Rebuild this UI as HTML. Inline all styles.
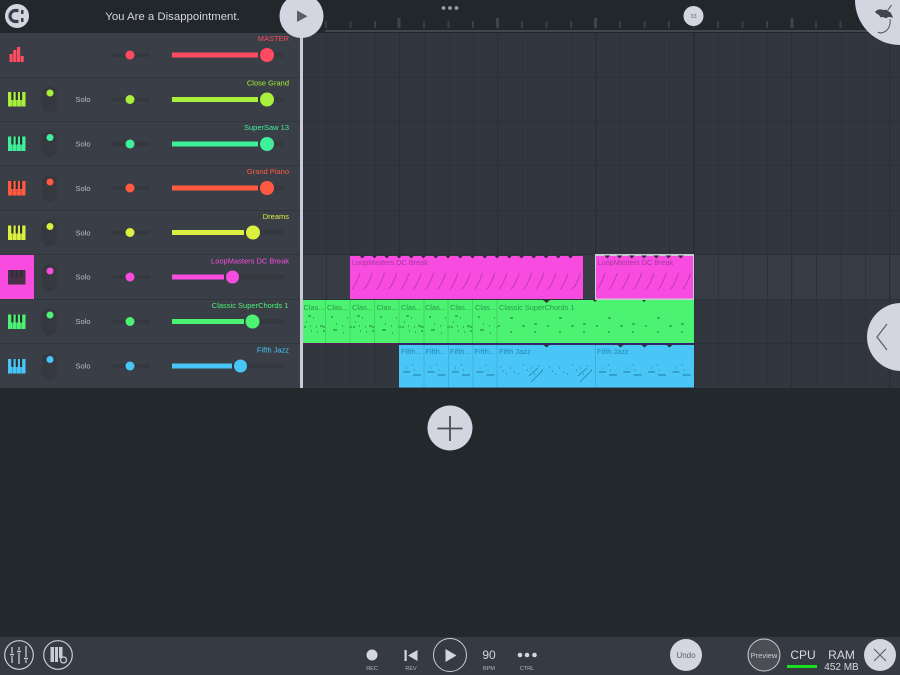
<!DOCTYPE html>
<html><head><meta charset="utf-8"><style>
html,body{margin:0;padding:0;width:900px;height:675px;overflow:hidden;background:#22282c}
svg{display:block;font-family:"Liberation Sans",sans-serif;filter:blur(.3px)}
</style></head><body>
<svg width="900" height="675" viewBox="0 0 900 675" xmlns="http://www.w3.org/2000/svg">
<defs>
<pattern id="grid" patternUnits="userSpaceOnUse" x="301.5" y="0" width="24.5" height="10"><rect x="0" width="1" height="10" fill="#2e3238"/></pattern>
<pattern id="bar" patternUnits="userSpaceOnUse" x="301" y="0" width="98" height="10"><rect x="0" width="1" height="10" fill="#2a2e34"/></pattern>
<pattern id="tick" patternUnits="userSpaceOnUse" x="325" y="21" width="24.5" height="9"><rect x="0" y="0" width="2" height="7" fill="#3a3e45"/></pattern>
<pattern id="pk" patternUnits="userSpaceOnUse" x="350" y="255" width="12.25" height="44"><path d="M2 34Q6 30 10 18" stroke="#a8309c" stroke-width=".7" fill="none"/></pattern>
<pattern id="pktri" patternUnits="userSpaceOnUse" x="356" y="255" width="12.25" height="4"><path d="M3.500 .5h5.500l-2.750 3z" fill="#3a2238"/></pattern>
<pattern id="gnA" patternUnits="userSpaceOnUse" x="303" y="300" width="49" height="44"><path d="M5 16h3M10 18h1M3 22h1M1 27h2M7 26h1M13 27h1M17 26h3M20 27h3M8 31h1M14 32h1M20 31h2M28 17h2M33 24h1M30 30h4M39 26h1M44 18h1M46 27h3M40 33h1" stroke="#1d7d3a" stroke-width="1" fill="none"/></pattern>
<pattern id="gnB" patternUnits="userSpaceOnUse" x="497" y="300" width="49" height="44"><path d="M13 18h3M37 24h3M1 26h2M25 26h3M13 32h2M37 32h2" stroke="#1d7d3a" stroke-width="1" fill="none"/></pattern>
<pattern id="blA" patternUnits="userSpaceOnUse" x="399" y="344" width="24.5" height="44"><path d="M4 28h7M14 31h8M7 24h1M13 21h1M15 26h1" stroke="#1d7ba5" stroke-width="1" fill="none"/></pattern>
<pattern id="blB" patternUnits="userSpaceOnUse" x="497" y="344" width="49" height="44"><path d="M3 23h1M6 27h1M9 30h1M13 24h1M17 28h1M21 30h1M26 21h1M30 26h1M34 24h1M37 30h1M41 22h1M45 26h1" stroke="#1d7ba5" stroke-width="1" fill="none"/><path d="M32 32L41 24M34 38L46 26" stroke="#1d7ba5" stroke-width=".7" fill="none"/></pattern>
<g id="piano"><rect x="0" y="0" width="17.500" height="14.500"/><path d="M4.400 0V14.500M8.800 0V14.500M13.100 0V14.500" stroke="#2c3036" stroke-width=".5" opacity=".6"/><rect x="3.300" y="0" width="2.200" height="8" fill="#2c3036"/><rect x="7.700" y="0" width="2.200" height="8" fill="#2c3036"/><rect x="12" y="0" width="2.200" height="8" fill="#2c3036"/></g>
</defs>

<rect width="900" height="675" fill="#22282c"/>
<rect width="900" height="33" fill="#22272c"/>

<!-- arrangement -->
<rect x="300" y="33" width="600" height="355" fill="#32363e"/>
<rect x="302" y="255" width="598" height="45" fill="#383c44"/>
<rect x="300" y="33" width="600" height="355" fill="url(#grid)"/>
<rect x="300" y="33" width="600" height="355" fill="url(#bar)"/>
<rect x="693.500" y="30" width="1" height="358" fill="#25282e"/>
<path d="M300 77.500H900M300 121.500H900M300 165.500H900M300 210.500H900M300 254.500H900M300 299.500H900M300 343.500H900" stroke="#2c3037" stroke-width="1"/>

<!-- ruler -->
<rect x="325" y="21" width="540" height="9" fill="url(#tick)"/>
<rect x="397.500" y="18" width="3" height="10" fill="#3f434a"/><rect x="496" y="18" width="3" height="10" fill="#3f434a"/><rect x="594" y="18" width="3" height="10" fill="#3f434a"/><rect x="790.500" y="18" width="3" height="10" fill="#3f434a"/>
<rect x="325" y="30" width="555" height="2" fill="#41464d"/>
<circle cx="443.500" cy="8" r="1.900" fill="#9b9ea6"/><circle cx="450" cy="8" r="1.900" fill="#9b9ea6"/><circle cx="456.500" cy="8" r="1.900" fill="#9b9ea6"/>
<circle cx="693.500" cy="16" r="10" fill="#d3d6e0"/><text x="693.500" y="18" font-size="5.500" fill="#6a6e76" text-anchor="middle">33</text>

<!-- clips -->
<rect x="350" y="256" width="233" height="43" fill="#f84ce0"/>
<rect x="350" y="256" width="233" height="43" fill="url(#pk)"/>
<rect x="356" y="255" width="220" height="4" fill="url(#pktri)"/>
<rect x="595" y="254" width="99" height="46" fill="#c9cbd3"/>
<rect x="596" y="256" width="97" height="42.500" fill="#f84ce0"/>
<rect x="596" y="256" width="97" height="42.500" fill="url(#pk)"/>
<rect x="601" y="255" width="85" height="4" fill="url(#pktri)"/>
<text x="352" y="265" font-size="7.300" fill="#a8359c">LoopMasters DC Break</text>
<text x="597.500" y="265" font-size="7.300" fill="#a8359c">LoopMasters DC Break</text>

<rect x="303" y="300" width="391" height="43" fill="#4cf272"/>
<rect x="303" y="300" width="194" height="43" fill="url(#gnA)"/>
<rect x="497" y="300" width="197" height="43" fill="url(#gnB)"/>
<path d="M325.500 300v43M350 300v43M374.500 300v43M399 300v43M424 300v43M448 300v43M472.500 300v43M497 300v43" stroke="#3fd561" stroke-width="1"/>
<path d="M543 300h7l-3.500 3zM593 300h4l-2 2zM642 300h4l-2 2z" fill="#333"/>
<rect x="303" y="343" width="96" height="1.500" fill="#5b1b55"/><rect x="399" y="343" width="295" height="1.500" fill="#3a1d7a"/>
<g font-size="7.400" fill="#259a48">
<text x="303.500" y="310">Clas...</text><text x="327" y="310">Clas...</text><text x="352" y="310">Clas...</text><text x="376.500" y="310">Clas...</text><text x="401" y="310">Clas...</text><text x="425" y="310">Clas...</text><text x="450" y="310">Clas...</text><text x="475" y="310">Clas...</text><text x="499" y="310">Classic SuperChords 1</text>
</g>

<rect x="399" y="345" width="295" height="42.500" fill="#4ac6f6"/>
<rect x="399" y="344" width="98" height="43" fill="url(#blA)"/>
<rect x="497" y="344" width="98" height="43" fill="url(#blB)"/>
<rect x="595" y="344" width="99" height="43" fill="url(#blA)"/>
<path d="M424 345v42M448.500 345v42M473 345v42M497 345v42M595.500 345v42" stroke="#3db0dc" stroke-width="1"/>
<path d="M543 344.500h7l-3.500 3zM617 344.500h7l-3.500 3zM641 344.500h7l-3.500 3zM666 344.500h7l-3.500 3z" fill="#333"/>
<g font-size="7.400" fill="#2489b3">
<text x="401" y="354">Fifth...</text><text x="425.500" y="354">Fifth...</text><text x="450" y="354">Fifth...</text><text x="474.500" y="354">Fifth...</text><text x="499" y="354">Fifth Jazz</text><text x="597" y="354">Fifth Jazz</text>
</g>

<!-- mixer panel -->
<rect x="0" y="33" width="300" height="355" fill="#3a3e46"/>
<path d="M0 77.500H300M0 121.500H300M0 165.500H300M0 210.500H300M0 254.500H300M0 299.500H300M0 343.500H300" stroke="#31353c" stroke-width="1"/>
<rect x="0" y="255" width="34" height="44" fill="#f84ce0"/>
<rect x="300" y="33" width="3" height="355" fill="#c9ccd8"/>

<!-- Row 1 master -->
<g fill="#ff4a62"><rect x="9.500" y="54" width="3.200" height="8"/><rect x="13.200" y="50" width="3.200" height="12"/><rect x="17" y="47" width="3.200" height="15"/><rect x="20.700" y="56" width="3" height="6"/></g>
<rect x="111" y="53" width="39" height="4" rx="2" fill="#35393f"/><circle cx="130" cy="55" r="4.500" fill="#ff4a62"/>
<rect x="172" y="52.500" width="112" height="5" rx="2" fill="#35393f"/><rect x="172" y="52.500" width="86" height="5" fill="#ff4a62"/><circle cx="267" cy="55" r="7" fill="#ff4a62"/>
<text x="289" y="41" font-size="7.500" fill="#ff4a62" text-anchor="end">MASTER</text>

<g><use href="#piano" x="8" y="92" fill="#a8f03c"/>
<rect x="41.500" y="86" width="16" height="27" rx="8" fill="#35393f"/><circle cx="50" cy="93" r="3.500" fill="#a8f03c"/>
<text x="83" y="102" font-size="7.500" fill="#b9bcc4" text-anchor="middle">Solo</text>
<rect x="111" y="97.500" width="39" height="4" rx="2" fill="#35393f"/><circle cx="130" cy="99.500" r="4.500" fill="#a8f03c"/>
<rect x="172" y="97" width="112" height="5" rx="2" fill="#35393f"/><rect x="172" y="97" width="86" height="5" fill="#a8f03c"/><circle cx="267" cy="99.500" r="7" fill="#a8f03c"/>
<text x="289" y="85.500" font-size="7.500" fill="#a8f03c" text-anchor="end">Close Grand</text></g>

<g><use href="#piano" x="8" y="136.500" fill="#3ef09a"/>
<rect x="41.500" y="130.500" width="16" height="27" rx="8" fill="#35393f"/><circle cx="50" cy="137.500" r="3.500" fill="#3ef09a"/>
<text x="83" y="146.500" font-size="7.500" fill="#b9bcc4" text-anchor="middle">Solo</text>
<rect x="111" y="142" width="39" height="4" rx="2" fill="#35393f"/><circle cx="130" cy="144" r="4.500" fill="#3ef09a"/>
<rect x="172" y="141.500" width="112" height="5" rx="2" fill="#35393f"/><rect x="172" y="141.500" width="86" height="5" fill="#3ef09a"/><circle cx="267" cy="144" r="7" fill="#3ef09a"/>
<text x="289" y="130" font-size="7.500" fill="#3ef09a" text-anchor="end">SuperSaw 13</text></g>

<g><use href="#piano" x="8" y="181" fill="#ff5a40"/>
<rect x="41.500" y="175" width="16" height="27" rx="8" fill="#35393f"/><circle cx="50" cy="182" r="3.500" fill="#ff5a40"/>
<text x="83" y="191" font-size="7.500" fill="#b9bcc4" text-anchor="middle">Solo</text>
<rect x="111" y="186" width="39" height="4" rx="2" fill="#35393f"/><circle cx="130" cy="188" r="4.500" fill="#ff5a40"/>
<rect x="172" y="185.500" width="112" height="5" rx="2" fill="#35393f"/><rect x="172" y="185.500" width="86" height="5" fill="#ff5a40"/><circle cx="267" cy="188" r="7" fill="#ff5a40"/>
<text x="289" y="174" font-size="7.500" fill="#ff5a40" text-anchor="end">Grand Piano</text></g>

<g><use href="#piano" x="8" y="225.500" fill="#dcf040"/>
<rect x="41.500" y="219.500" width="16" height="27" rx="8" fill="#35393f"/><circle cx="50" cy="226.500" r="3.500" fill="#dcf040"/>
<text x="83" y="235.500" font-size="7.500" fill="#b9bcc4" text-anchor="middle">Solo</text>
<rect x="111" y="230.500" width="39" height="4" rx="2" fill="#35393f"/><circle cx="130" cy="232.500" r="4.500" fill="#dcf040"/>
<rect x="172" y="230" width="112" height="5" rx="2" fill="#35393f"/><rect x="172" y="230" width="72" height="5" fill="#dcf040"/><circle cx="253" cy="232.500" r="7" fill="#dcf040"/>
<text x="289" y="219" font-size="7.500" fill="#dcf040" text-anchor="end">Dreams</text></g>

<g><rect x="8" y="270" width="17.500" height="14.500" fill="#4b3148"/><path d="M12.400 270v8M16.800 270v8M21.200 270v8" stroke="#2c3036" stroke-width="2.200"/>
<rect x="41.500" y="264" width="16" height="27" rx="8" fill="#35393f"/><circle cx="50" cy="271" r="3.500" fill="#f84ce0"/>
<text x="83" y="279.500" font-size="7.500" fill="#b9bcc4" text-anchor="middle">Solo</text>
<rect x="111" y="275" width="39" height="4" rx="2" fill="#35393f"/><circle cx="130" cy="277" r="4.500" fill="#f84ce0"/>
<rect x="172" y="274.500" width="112" height="5" rx="2" fill="#35393f"/><rect x="172" y="274.500" width="52" height="5" fill="#f84ce0"/><circle cx="232.500" cy="277" r="6.500" fill="#f84ce0"/>
<text x="289" y="263.500" font-size="7.500" fill="#f84ce0" text-anchor="end">LoopMasters DC Break</text></g>

<g><use href="#piano" x="8" y="314.500" fill="#4cf272"/>
<rect x="41.500" y="308.500" width="16" height="27" rx="8" fill="#35393f"/><circle cx="50" cy="315" r="3.500" fill="#4cf272"/>
<text x="83" y="324" font-size="7.500" fill="#b9bcc4" text-anchor="middle">Solo</text>
<rect x="111" y="319.500" width="39" height="4" rx="2" fill="#35393f"/><circle cx="130" cy="321.500" r="4.500" fill="#4cf272"/>
<rect x="172" y="319" width="112" height="5" rx="2" fill="#35393f"/><rect x="172" y="319" width="72" height="5" fill="#4cf272"/><circle cx="252.500" cy="321.500" r="7" fill="#4cf272"/>
<text x="288.500" y="308" font-size="7.500" fill="#4cf272" text-anchor="end">Classic SuperChords 1</text></g>

<g><use href="#piano" x="8" y="359" fill="#48c6f8"/>
<rect x="41.500" y="353" width="16" height="27" rx="8" fill="#35393f"/><circle cx="50" cy="359.500" r="3.500" fill="#48c6f8"/>
<text x="83" y="368.500" font-size="7.500" fill="#b9bcc4" text-anchor="middle">Solo</text>
<rect x="111" y="364" width="39" height="4" rx="2" fill="#35393f"/><circle cx="130" cy="366" r="4.500" fill="#48c6f8"/>
<rect x="172" y="363.500" width="112" height="5" rx="2" fill="#35393f"/><rect x="172" y="363.500" width="60" height="5" fill="#48c6f8"/><circle cx="240.500" cy="366" r="6.500" fill="#48c6f8"/>
<text x="289" y="352.500" font-size="7.500" fill="#48c6f8" text-anchor="end">Fifth Jazz</text></g>

<!-- top bar items -->
<circle cx="17" cy="16" r="12" fill="#d3d6e0"/>
<path d="M18.500 10.500H15.500a5.500 5.500 0 0 0 0 11H18.500" stroke="#3a3e46" stroke-width="3.200" fill="none"/><rect x="21" y="10" width="2.500" height="4" fill="#3a3e46"/><rect x="21" y="18" width="2.500" height="4" fill="#3a3e46"/>
<text x="172.500" y="20" font-size="11.400" fill="#d4d6dc" text-anchor="middle">You Are a Disappointment.</text>
<circle cx="301.500" cy="16" r="22" fill="#d3d6e0"/>
<path d="M297 10.500v11.500l10.500-5.750z" fill="#5a5e67"/>
<circle cx="900" cy="0" r="45" fill="#d3d6e0"/>
<path d="M875 12c2-3 6-3 8-2 2 0 4-1 5 1 3 1 4 4 5 7-2-1-4-1-5-1-2 2-3 1-5 0-2 1-3 0-4-2-2-1-3-2-4-3z" fill="#41454d"/>
<path d="M888 10l3.500-5M890 19c1 8-3 13-9 14-2 0-3-1-3-1" stroke="#41454d" stroke-width=".9" fill="none"/>

<!-- side tab -->
<circle cx="901" cy="337" r="34" fill="#d3d6e0"/>
<path d="M887 324L877 337L887 350" stroke="#5f636c" stroke-width="1.300" fill="none"/>

<!-- add -->
<circle cx="450" cy="428" r="22.500" fill="#d3d6e0"/>
<path d="M450 416v25M437.500 428.500h25" stroke="#4b4f57" stroke-width="1.800"/>

<!-- bottom bar -->
<rect x="0" y="637" width="900" height="38" fill="#363a42"/>
<g stroke="#c8ccd4" fill="none">
<circle cx="19" cy="655" r="14.300" stroke-width="1.200"/>
<circle cx="58" cy="655" r="14.300" stroke-width="1.200"/>
<circle cx="450" cy="655" r="16.500" stroke-width="1"/>
</g>
<path d="M12 647v6M12 656v7M19 647v3M19 653v11M26 646v11M26 660v3" stroke="#c8ccd4" stroke-width="1.300"/>
<path d="M10 654.500h4M17 651.500h4M24 658.500h4" stroke="#c8ccd4" stroke-width="1.500"/>
<g fill="#c8ccd4"><rect x="50.500" y="647" width="3.500" height="15"/><rect x="55" y="647" width="3" height="15"/><rect x="59" y="647" width="3.500" height="11"/></g>
<circle cx="63.500" cy="660" r="3" fill="none" stroke="#c8ccd4" stroke-width="1.300"/>

<circle cx="372" cy="655" r="5.500" fill="#d3d6e0"/>
<text x="372" y="670" font-size="5.500" fill="#b3b7bf" text-anchor="middle">REC</text>
<rect x="404.500" y="650" width="2.200" height="11" fill="#d3d6e0"/><path d="M417.500 650v11l-9.500-5.500z" fill="#d3d6e0"/>
<text x="411" y="670" font-size="5.500" fill="#b3b7bf" text-anchor="middle">REV</text>
<path d="M445.500 649v13l11-6.500z" fill="#d3d6e0"/>
<text x="489" y="659" font-size="12" fill="#d3d6e0" text-anchor="middle">90</text>
<text x="489" y="670" font-size="5.500" fill="#b3b7bf" text-anchor="middle">BPM</text>
<circle cx="520" cy="655" r="2.300" fill="#d3d6e0"/><circle cx="527" cy="655" r="2.300" fill="#d3d6e0"/><circle cx="534.500" cy="655" r="2.300" fill="#d3d6e0"/>
<text x="527" y="670" font-size="5.500" fill="#b3b7bf" text-anchor="middle">CTRL</text>

<circle cx="686" cy="655" r="16" fill="#d3d6e0"/>
<text x="686" y="658" font-size="8" fill="#5a5e67" text-anchor="middle">Undo</text>
<circle cx="764" cy="655" r="16" fill="#4b4f55" stroke="#c8ccd4" stroke-width="1"/>
<text x="764" y="658" font-size="7.500" fill="#c8ccd4" text-anchor="middle">Preview</text>
<text x="803" y="659" font-size="12" fill="#d8dae0" text-anchor="middle">CPU</text>
<rect x="787" y="665" width="30" height="3" fill="#18e020"/>
<text x="841.500" y="659" font-size="12" fill="#d8dae0" text-anchor="middle">RAM</text>
<text x="841.500" y="670" font-size="10" fill="#d8dae0" text-anchor="middle">452 MB</text>
<circle cx="880" cy="655" r="16" fill="#d3d6e0"/>
<path d="M874 649l12 12M886 649l-12 12" stroke="#5a5e67" stroke-width="1.100"/>
</svg>
</body></html>
